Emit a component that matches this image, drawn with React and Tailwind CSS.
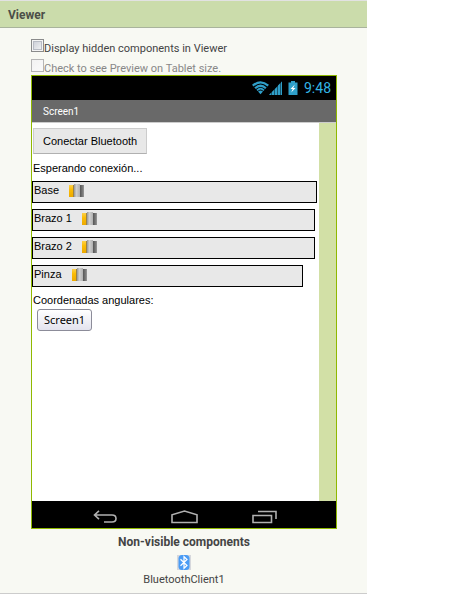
import React from "react";

function WifiIcon() {
  return (
    <svg width="17" height="14" viewBox="0 0 18 14" fill="none" stroke="#2f9fc9" strokeWidth="2.400">
      <path d="M.8 4.600Q9-2.400 17.200 4.600" />
      <path d="M3.300 7.300Q9 2 14.700 7.300" />
      <path d="M5.300 9.500Q9 5.700 12.700 9.500" strokeWidth="1.800" />
      <path d="M6.400 10.600Q9 8.800 11.600 10.600L9 13.600Z" fill="#2f9fc9" stroke="none" />
    </svg>
  );
}

function SignalIcon() {
  return (
    <svg width="13" height="14" viewBox="0 0 13 14" fill="#2f9fc9">
      <path d="M0 14L2 12V14ZM3 14V11L5 9V14ZM6 14V8L8 6V14ZM9 14V4.500L11 2.500V14ZM12 14V1.500L13 .5V14Z" />
      <path d="M0 14L13 .5V14Z" opacity=".55" />
    </svg>
  );
}

function BatteryIcon() {
  return (
    <svg width="10" height="14" viewBox="0 0 10 14" className="block">
      <path d="M3 0h4v1.500h2.500v12.500h-9V1.500H3z" fill="#2f9fc9" />
      <path d="M6.800 3.500L2.500 8h2.200l-1.500 3.500L7.500 7H5.200z" fill="#fff" />
    </svg>
  );
}

function ThumbIcon() {
  return (
    <svg width="15" height="13" viewBox="0 0 15 13" className="shrink-0">
      <defs>
        <linearGradient id="thumbGold" x1="0" y1="0" x2="0" y2="1">
          <stop offset="0" stopColor="#fdd04a" />
          <stop offset=".4" stopColor="#fbbc05" />
          <stop offset="1" stopColor="#eda900" />
        </linearGradient>
        <linearGradient id="thumbSilver">
          <stop offset="0" stopColor="#999" />
          <stop offset=".4" stopColor="#d0d0d0" />
          <stop offset="1" stopColor="#b0b0b0" />
        </linearGradient>
        <linearGradient id="thumbSteel">
          <stop offset="0" stopColor="#555" />
          <stop offset=".6" stopColor="#777" />
          <stop offset="1" stopColor="#999" />
        </linearGradient>
      </defs>
      <rect x="0" y="1" width="5" height="12" fill="url(#thumbGold)" />
      <rect x="4" y="1" width="1" height="12" fill="#9b8245" />
      <rect x="5" y="0" width="6" height="13" fill="url(#thumbSilver)" />
      <rect x="11" y="1" width="4" height="12" fill="url(#thumbSteel)" />
    </svg>
  );
}

function BluetoothIcon() {
  return (
    <svg width="14" height="15" viewBox="0 0 14 15" className="block">
      <rect width="14" height="15" fill="#d6d8dc" />
      <rect x="1.500" y="0" width="11" height="15" rx="3.500" fill="#4a9cf5" />
      <path d="M3.500 4.200L10 10.500L7 13.300V1.700L10 4.500L3.500 10.800" fill="none" stroke="#fff" strokeWidth="1.200" />
    </svg>
  );
}

function SliderRow({ name, width }) {
  return (
    <div className={`flex h-[22px] items-start gap-2.5 border border-black bg-[#e8e8e8] pl-px pt-0.5 leading-[13px] ${width}`}>
      <span>{name}</span>
      <ThumbIcon />
    </div>
  );
}

function CheckRow({ label, disabled }) {
  return (
    <label className={`flex h-5 items-start ${disabled ? "text-[#888]" : "text-[#444]"}`}>
      <input
        type="checkbox"
        disabled={disabled}
        className={`size-[13px] shrink-0 appearance-none border bg-linear-to-br ${
          disabled ? "border-[#b5b5b5] from-[#f2f2f2] to-[#fafafa]" : "border-[#8a8b8b] from-[#c5c9d2] to-[#f8f8f8] shadow-[inset_0_0_0_1px_#f4f4f4,inset_0_0_0_2px_#b8bcc4]"
        }`}
      />
      <span className="pt-0.5 leading-4">{label}</span>
    </label>
  );
}

function Phone() {
  return (
    <section className="w-[306px] border border-[#8fb900] bg-white font-['Liberation_Sans',Arial,sans-serif] text-[11px] text-black">
      <div className="flex h-6 items-center justify-end bg-black pr-[5px] font-['Roboto',sans-serif] text-[#33b5e5]">
        <WifiIcon />
        <SignalIcon />
        <span className="px-1.5"><BatteryIcon /></span>
        <span className="text-[14px] leading-4">9:48</span>
      </div>
      <div className="flex h-[23px] items-center border-b border-[#ccc] bg-[#696969] pl-[11px] font-['Roboto',sans-serif] text-[10px] text-white">
        Screen1
      </div>
      <div className="flex h-[378px]">
        <div className="flex-1 pt-[5px]">
          <button className="ml-px block h-[26px] border border-[#ccc] border-b-[#b0b0b0] bg-[#e8e8e8] px-[9px]">
            Conectar Bluetooth
          </button>
          <p className="pb-1.5 pl-px pt-2 leading-[13px]">Esperando conexión...</p>
          <div className="flex flex-col gap-[6px]">
            <SliderRow name="Base" width="w-[285px]" />
            <SliderRow name="Brazo 1" width="w-[283px]" />
            <SliderRow name="Brazo 2" width="w-[283px]" />
            <SliderRow name="Pinza" width="w-[271px]" />
          </div>
          <p className="pb-0.5 pl-px pt-[7px] leading-[13px]">Coordenadas angulares:</p>
          <button className="ml-[5px] block h-[22px] rounded-[3px] border border-[#8c8c99] bg-linear-to-b from-white to-[#e3e3ee] px-1.5 font-['Noto_Sans',sans-serif] text-[11px] leading-4">
            Screen1
          </button>
        </div>
        <div className="w-[17px] bg-[#d2e0a6]" />
      </div>
      <div className="flex h-[27px] items-center justify-center gap-[54px] bg-black pt-1">
        <button aria-label="Back">
          <svg width="25" height="14" viewBox="0 0 25 14" fill="none" stroke="#b0b0b0" strokeWidth="1.600" className="block">
            <path d="M7 .8L2.500 5L7 9.200M3 5H20Q24 5 24 8.500T20 12H12" />
          </svg>
        </button>
        <button aria-label="Home">
          <svg width="27" height="14" viewBox="0 0 27 14" fill="none" stroke="#b0b0b0" strokeWidth="1.600" className="block">
            <path d="M1 12.500V4.800L13.500 1L26 4.800V12.500Z" />
          </svg>
        </button>
        <button aria-label="Recent apps">
          <svg width="25" height="14" viewBox="0 0 25 14" fill="none" stroke="#b0b0b0" strokeWidth="1.600" className="block">
            <path d="M1 5.500H19.500V12.500H1ZM6 1.500H24V9" />
          </svg>
        </button>
      </div>
    </section>
  );
}

export default function App() {
  return (
    <div className="min-h-screen bg-white font-['Roboto',sans-serif] text-[11px] text-[#444]">
      <main className="w-full max-w-[367px] border-b border-t border-b-[#ccc] border-t-[#e2e2e2] bg-[#f8f9f3]">
        <h1 className="flex h-[27px] items-center border-b border-[#a9b39c] bg-[#cbdcab] pl-2 pt-px text-[12px] font-bold text-[#4c4f48]">
          Viewer
        </h1>
        <div className="pl-[31px] pr-[30px] pt-[11px]">
          <CheckRow label="Display hidden components in Viewer" />
          <div className="h-4">
            <CheckRow label="Check to see Preview on Tablet size." disabled />
          </div>
          <Phone />
          <div className="flex flex-col items-center pb-[5px] pt-[5px]">
            <h2 className="text-[12px] font-bold leading-4">Non-visible components</h2>
            <div className="flex flex-col items-center pt-[5px]">
              <BluetoothIcon />
              <span className="pt-0.5 leading-4">BluetoothClient1</span>
            </div>
          </div>
        </div>
      </main>
    </div>
  );
}
